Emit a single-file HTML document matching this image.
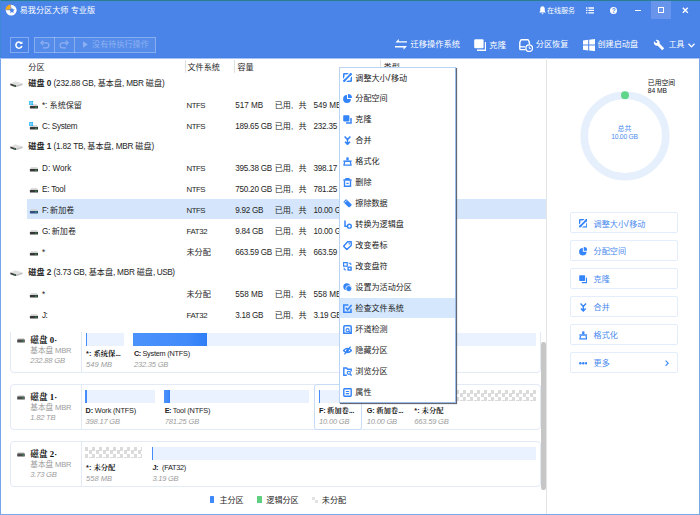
<!DOCTYPE html><html lang="zh-CN"><head><meta charset="utf-8"><title>易我分区大师 专业版</title><style>
*{box-sizing:border-box;margin:0;padding:0}
html,body{width:700px;height:515px;overflow:hidden;background:#fff}
body{position:relative;font-family:"Liberation Sans","Noto Sans CJK SC",sans-serif;font-size:8.1px;color:#262626;}
.a{position:absolute;white-space:nowrap}
.t{position:absolute;white-space:nowrap;line-height:12px;height:12px}
#hdr{left:0;top:0;width:700px;height:58px;background:#4a84e8}
.w{color:#fff}
.sel{position:absolute;left:27px;width:519px;background:#d5e6fc}
.b{font-weight:bold}
.g{color:#9c9c9c}
.i{font-style:italic}
.sf{font-family:"Liberation Serif","Noto Serif CJK SC",serif;font-weight:bold}
.lb{font-family:"Liberation Sans","Noto Serif CJK SC",serif;font-weight:bold}
.card{position:absolute;left:10px;width:531px;border:1px solid #e2eaf6;border-radius:4px;background:#fff}
.card .dv{position:absolute;left:69.5px;top:0;bottom:0;width:1px;background:#e2eaf6}
.bar{position:absolute;background:#e9f2fe}
.used{position:absolute;left:0;top:0;bottom:0;background:linear-gradient(90deg,#4b92fb 0%,#408afa 75%,#2f7ef6 100%)}
.chk{background-color:#fff;background-image:conic-gradient(#fff 25%,#dbdbdb 0 50%,#fff 0 75%,#dbdbdb 0);background-size:7px 7px}
#menu{left:339px;top:67px;width:117px;height:335.5px;background:#fff;border:1px solid #bcd4f3;border-right-color:#9cbbe6;border-bottom-color:#9cbbe6;box-shadow:1px 1px 0.8px rgba(70,78,92,.85)}
.mi{position:absolute;left:0;width:115px}
.mi.hl{background:#d4e7fd;height:19.7px !important}
.mi svg{position:absolute;left:3px;width:9px;height:9px}
.btn{position:absolute;left:570px;width:108px;height:21px;border:1px solid #e4edfb;border-radius:2px;background:#fff}
.btn svg{position:absolute;left:7.6px;top:6.2px;width:8.6px;height:8.6px}
</style></head><body>
<div class="a" id="hdr">
<div class="a" style="left:0;top:0;width:700px;height:1px;background:#2c7c98"></div>
<div class="a" style="left:0;top:1px;width:700px;height:1px;background:#4489de"></div>
<div class="a" style="left:0;top:0;width:1px;height:58px;background:#3f88d8"></div>
<div class="a" style="left:0;top:57px;width:700px;height:1px;background:#4680e4"></div>
<svg class="a" style="left:4.4px;top:3.3px;width:14px;height:14px" viewBox="0 0 14 14"><circle cx="7.2" cy="7.2" r="5.4" fill="#fff"/><path d="M6.8 6.9L1.2 6.9A5.6 5.6 0 0 1 6.8 1.3Z" fill="#f8a91f" stroke="#4a84e8" stroke-width="0.5"/><path d="M7.9 4.4l0.9 1.9 2 .2-1.5 1.4.4 2-1.8-1-1.8 1 .4-2L5 6.5l2-.2z" fill="#4a84e8"/></svg>
<div class="t w" style="left:19.7px;top:5px;font-size:8.15px;">易我分区大师<span style="font-size:8.15px;letter-spacing:0.01px"> </span>专业版</div>
<svg class="a" style="left:539px;top:6px;width:7px;height:8.5px" viewBox="0 0 7 8.5"><path d="M3.5 0.3C1.8 0.3 1.2 1.8 1.2 3.2V5L0.2 6.6H6.8L5.8 5V3.2C5.8 1.8 5.2 0.3 3.5 0.3Z" fill="#fff"/><path d="M2.4 7.2H4.6L3.5 8.4Z" fill="#fff"/></svg>
<div class="t w" style="left:547.0px;top:5px;font-size:7.00px;">在线服务</div>
<svg class="a" style="left:586px;top:7px;width:8px;height:7px" viewBox="0 0 8 7"><path d="M0 1H1.4M2.4 1H8M0 3.4H1.4M2.4 3.4H8M0 5.8H1.4M2.4 5.8H8" stroke="#fff" stroke-width="1.3"/></svg>
<div class="a" style="left:610.1px;top:6.5px;width:7.4px;height:7.4px;border-radius:4px;background:#fff;color:#4a84e8;font-size:6.5px;font-weight:bold;line-height:7.6px;text-align:center">?</div>
<div class="a" style="left:635px;top:9.5px;width:5.5px;height:1.6px;background:#fff"></div>
<div class="a" style="left:651.4px;top:1px;width:19.4px;height:17.5px;background:#6894ec"></div>
<div class="a" style="left:658.2px;top:7.2px;width:6.2px;height:6px;border:1.6px solid #fff"></div>
<svg class="a" style="left:682px;top:7px;width:6.6px;height:6.6px" viewBox="0 0 8 8"><path d="M1 1L7 7M7 1L1 7" stroke="#fff" stroke-width="1.7"/></svg>
<div class="a" style="left:10px;top:36.5px;width:18.6px;height:16.2px;border:1px solid rgba(255,255,255,.32)"></div>
<svg class="a" style="left:15.4px;top:41px;width:8px;height:8px" viewBox="0 0 10 10"><path d="M8.6 6.3A3.8 3.8 0 1 1 7.4 2.2" fill="none" stroke="#fff" stroke-width="1.9"/><path d="M5.4 3.9H9.3V0.3Z" fill="#fff"/></svg>
<div class="a" style="left:34.3px;top:36.5px;width:121.4px;height:16.2px;border:1px solid rgba(255,255,255,.3);background:rgba(255,255,255,.07)"></div>
<div class="a" style="left:54.3px;top:36.5px;width:1px;height:16.2px;background:rgba(255,255,255,.3)"></div>
<div class="a" style="left:74.3px;top:36.5px;width:1px;height:16.2px;background:rgba(255,255,255,.3)"></div>
<svg class="a" style="left:39.6px;top:40.4px;width:10px;height:9px" viewBox="0 0 10 9"><path d="M1 2.8H6.4A2.5 2.5 0 0 1 6.4 7.8H3" fill="none" stroke="#8db0f2" stroke-width="1.2"/><path d="M3.2 0.6L0.9 2.8L3.2 5" fill="none" stroke="#8db0f2" stroke-width="1.2"/></svg>
<svg class="a" style="left:59.3px;top:40.4px;width:10px;height:9px" viewBox="0 0 10 9"><path d="M9 2.8H3.6A2.5 2.5 0 0 0 3.6 7.8H7" fill="none" stroke="#8db0f2" stroke-width="1.2"/><path d="M6.8 0.6L9.1 2.8L6.8 5" fill="none" stroke="#8db0f2" stroke-width="1.2"/></svg>
<svg class="a" style="left:82.8px;top:41.2px;width:4.8px;height:7px" viewBox="0 0 5 7"><path d="M0 0L5 3.5L0 7Z" fill="#8db0f2"/></svg>
<div class="t " style="left:92.1px;top:39px;font-size:8.10px;color:#8db0f2;">没有待执行操作</div>
<svg class="a" style="left:394.8px;top:39.3px;width:12.4px;height:11px" viewBox="0 0 12.4 11"><path d="M0.4 3.6L3.8 0V2.2H12.2V3.6Z M0 7H12L8.6 10.8V8.5H0Z" fill="#fff"/></svg>
<div class="t w" style="left:410.4px;top:39px;font-size:8.25px;">迁移操作系统</div>
<svg class="a" style="left:473.6px;top:38.6px;width:12.8px;height:12.2px" viewBox="0 0 12.8 12.2"><rect x="0.2" y="0.2" width="9.4" height="9" rx="1.2" fill="#fff"/><path d="M11.6 3V11.2H3" fill="none" stroke="#fff" stroke-width="1.5"/></svg>
<div class="t w" style="left:489.3px;top:39px;font-size:8.40px;">克隆</div>
<svg class="a" style="left:519px;top:39px;width:14.4px;height:13px" viewBox="0 0 14.4 13"><path d="M6.4 10.6H1.6Q0.8 10.6 0.8 9.8V3.4L1.7 1.2Q1.9 0.8 2.5 0.8H8.7Q9.3 0.8 9.5 1.2L10.4 3.4V5.4" fill="none" stroke="#fff" stroke-width="1.4"/><path d="M0.8 7.8H6" stroke="#fff" stroke-width="1.3"/><circle cx="10.2" cy="9.2" r="3.3" fill="#4a84e8" stroke="#fff" stroke-width="1.3"/><path d="M10.2 7.4V9.4H11.8" fill="none" stroke="#fff" stroke-width="1"/></svg>
<div class="t w" style="left:535.8px;top:39px;font-size:8.15px;">分区恢复</div>
<svg class="a" style="left:582.7px;top:39px;width:12px;height:12.2px" viewBox="0 0 12 12"><path d="M0 1.4L5.2 0.7V5.5H0ZM6.2 0.6L12 0V5.5H6.2ZM0 6.5H5.2V11.3L0 10.6ZM6.2 6.5H12V12L6.2 11.4Z" fill="#fff"/></svg>
<div class="t w" style="left:597.4px;top:39px;font-size:8.15px;">创建启动盘</div>
<svg class="a" style="left:653px;top:39px;width:11.8px;height:11.8px;transform:scaleX(-1)" viewBox="0 0 12 12"><path d="M11 2.4L8.8 4.4L7.4 3L9.4 0.9A3.3 3.3 0 0 0 5.2 4.8L0.6 9.4L2.6 11.4L7.2 6.8A3.3 3.3 0 0 0 11 2.4Z" fill="#fff"/></svg>
<div class="t w" style="left:668.8px;top:39px;font-size:7.80px;">工具</div>
<svg class="a" style="left:687.6px;top:42.6px;width:7px;height:5px" viewBox="0 0 7 5"><path d="M0.5 0.8L3.5 3.9L6.5 0.8" fill="none" stroke="#fff" stroke-width="1.3"/></svg>
</div>
<div class="a" style="left:0;top:58px;width:700px;height:1px;background:#a9c4f4"></div>
<div class="t " style="left:28.3px;top:62px;font-size:8.10px;">分区</div>
<div class="t " style="left:187.5px;top:62px;font-size:8.10px;">文件系统</div>
<div class="t " style="left:237.5px;top:62px;font-size:8.10px;">容量</div>
<div class="t " style="left:383.6px;top:62px;font-size:8.10px;">类型</div>
<div class="a" style="left:184.5px;top:60px;width:1px;height:13px;background:#e1e1e1"></div>
<div class="a" style="left:234.0px;top:60px;width:1px;height:13px;background:#e1e1e1"></div>
<div class="a" style="left:379.5px;top:60px;width:1px;height:13px;background:#e1e1e1"></div>
<svg class="a" style="left:10.4px;top:80.5px;width:13px;height:6.8px" viewBox="0 0 13 6.8"><path d="M0.3 2.6L5.4 0.2L12.7 2.5L6 4.3Z" fill="#e0e0e0"/><path d="M6 4.3L12.7 2.5V3.9L6 6.4Z" fill="#c2c2c2"/><path d="M0.3 2.6L6 4.3V6.4L0.3 4.2Z" fill="#3c3c3c"/><path d="M4.1 4.5L5.2 4.85V5.5L4.1 5.15Z" fill="#3fd06a"/></svg>
<div class="t" style="left:28.3px;top:78px"><b>磁盘<span style="font-size:8.23px;letter-spacing:0.05px"> 0</span></b><span style="font-size:8.23px;letter-spacing:-0.20px"> (232.88 GB, </span>基本盘<span style="font-size:8.23px;letter-spacing:-0.23px">, MBR </span>磁盘<span style="font-size:8.23px;letter-spacing:-0.20px">)</span></div>
<svg class="a" style="left:28.9px;top:101.0px;width:9.2px;height:7.6px" viewBox="0 0 9.2 7.6"><path d="M2 3.3H8.2L9.1 5H1Z" fill="#d2d2d2"/><rect x="0.9" y="4.9" width="8.2" height="2.5" rx="0.5" fill="#363636"/><rect x="6.3" y="5.7" width="1.4" height="0.9" fill="#35c565"/><path d="M0 0.3L1.8 0.1V1.8H0ZM2.2 0.1L4.1 0V1.8H2.2ZM0 2.2H1.8V3.9L0 3.8ZM2.2 2.2H4.1V4L2.2 3.9Z" fill="#1fb2f4"/></svg>
<div class="t " style="left:42.0px;top:100px;font-size:8.10px;"><span style="font-size:8.13px;letter-spacing:-0.05px">*: </span>系统保留</div>
<div class="t " style="left:186.5px;top:100px;font-size:8.10px;"><span style="font-size:7.84px;letter-spacing:-0.50px">NTFS</span></div>
<div class="t " style="left:235.2px;top:100px;font-size:8.10px;"><span style="font-size:8.13px;letter-spacing:-0.02px">517 MB</span></div>
<div class="t " style="left:274.7px;top:100px;font-size:8.10px;">已用<span style="letter-spacing:1.6px">, </span>共</div>
<div class="t " style="left:313.5px;top:100px;font-size:8.10px;"><span style="font-size:8.13px;letter-spacing:-0.02px">549 MB</span></div>
<svg class="a" style="left:28.9px;top:122.0px;width:9.2px;height:7.6px" viewBox="0 0 9.2 7.6"><path d="M2 3.3H8.2L9.1 5H1Z" fill="#d2d2d2"/><rect x="0.9" y="4.9" width="8.2" height="2.5" rx="0.5" fill="#363636"/><rect x="6.3" y="5.7" width="1.4" height="0.9" fill="#35c565"/><path d="M0 0.3L1.8 0.1V1.8H0ZM2.2 0.1L4.1 0V1.8H2.2ZM0 2.2H1.8V3.9L0 3.8ZM2.2 2.2H4.1V4L2.2 3.9Z" fill="#1fb2f4"/></svg>
<div class="t " style="left:42.0px;top:121px;font-size:8.10px;"><span style="font-size:8.13px;letter-spacing:-0.23px">C: System</span></div>
<div class="t " style="left:186.5px;top:121px;font-size:8.10px;"><span style="font-size:7.84px;letter-spacing:-0.50px">NTFS</span></div>
<div class="t " style="left:235.2px;top:121px;font-size:8.10px;"><span style="font-size:8.13px;letter-spacing:-0.22px">189.65 GB</span></div>
<div class="t " style="left:274.7px;top:121px;font-size:8.10px;">已用<span style="letter-spacing:1.6px">, </span>共</div>
<div class="t " style="left:313.5px;top:121px;font-size:8.10px;"><span style="font-size:8.13px;letter-spacing:-0.22px">232.35 GB</span></div>
<svg class="a" style="left:10.4px;top:143.5px;width:13px;height:6.8px" viewBox="0 0 13 6.8"><path d="M0.3 2.6L5.4 0.2L12.7 2.5L6 4.3Z" fill="#e0e0e0"/><path d="M6 4.3L12.7 2.5V3.9L6 6.4Z" fill="#c2c2c2"/><path d="M0.3 2.6L6 4.3V6.4L0.3 4.2Z" fill="#3c3c3c"/><path d="M4.1 4.5L5.2 4.85V5.5L4.1 5.15Z" fill="#3fd06a"/></svg>
<div class="t" style="left:28.3px;top:141px"><b>磁盘<span style="font-size:8.23px;letter-spacing:0.05px"> 1</span></b><span style="font-size:8.23px;letter-spacing:-0.23px"> (1.82 TB, </span>基本盘<span style="font-size:8.23px;letter-spacing:-0.23px">, MBR </span>磁盘<span style="font-size:8.23px;letter-spacing:-0.20px">)</span></div>
<svg class="a" style="left:28.9px;top:164.0px;width:9.2px;height:7.6px" viewBox="0 0 9.2 7.6"><path d="M2 3.3H8.2L9.1 5H1Z" fill="#d2d2d2"/><rect x="0.9" y="4.9" width="8.2" height="2.5" rx="0.5" fill="#363636"/><rect x="6.3" y="5.7" width="1.4" height="0.9" fill="#35c565"/></svg>
<div class="t " style="left:42.0px;top:163px;font-size:8.10px;"><span style="font-size:8.13px;letter-spacing:0.02px">D: Work</span></div>
<div class="t " style="left:186.5px;top:163px;font-size:8.10px;"><span style="font-size:7.84px;letter-spacing:-0.50px">NTFS</span></div>
<div class="t " style="left:235.2px;top:163px;font-size:8.10px;"><span style="font-size:8.13px;letter-spacing:-0.22px">395.38 GB</span></div>
<div class="t " style="left:274.7px;top:163px;font-size:8.10px;">已用<span style="letter-spacing:1.6px">, </span>共</div>
<div class="t " style="left:313.5px;top:163px;font-size:8.10px;"><span style="font-size:8.13px;letter-spacing:-0.22px">398.17 GB</span></div>
<svg class="a" style="left:28.9px;top:185.0px;width:9.2px;height:7.6px" viewBox="0 0 9.2 7.6"><path d="M2 3.3H8.2L9.1 5H1Z" fill="#d2d2d2"/><rect x="0.9" y="4.9" width="8.2" height="2.5" rx="0.5" fill="#363636"/><rect x="6.3" y="5.7" width="1.4" height="0.9" fill="#35c565"/></svg>
<div class="t " style="left:42.0px;top:184px;font-size:8.10px;"><span style="font-size:8.13px;letter-spacing:-0.20px">E: Tool</span></div>
<div class="t " style="left:186.5px;top:184px;font-size:8.10px;"><span style="font-size:7.84px;letter-spacing:-0.50px">NTFS</span></div>
<div class="t " style="left:235.2px;top:184px;font-size:8.10px;"><span style="font-size:8.13px;letter-spacing:-0.22px">750.20 GB</span></div>
<div class="t " style="left:274.7px;top:184px;font-size:8.10px;">已用<span style="letter-spacing:1.6px">, </span>共</div>
<div class="t " style="left:313.5px;top:184px;font-size:8.10px;"><span style="font-size:8.13px;letter-spacing:-0.22px">781.25 GB</span></div>
<div class="sel" style="top:198.9px;height:20.3px"></div>
<svg class="a" style="left:28.9px;top:206.0px;width:9.2px;height:7.6px" viewBox="0 0 9.2 7.6"><path d="M2 3.3H8.2L9.1 5H1Z" fill="#d2d2d2"/><rect x="0.9" y="4.9" width="8.2" height="2.5" rx="0.5" fill="#2f4f7f"/><rect x="6.3" y="5.7" width="1.4" height="0.9" fill="#35c565"/></svg>
<div class="t " style="left:42.0px;top:205px;font-size:8.10px;"><span style="font-size:8.13px;letter-spacing:-0.46px">F: </span>新加卷</div>
<div class="t " style="left:186.5px;top:205px;font-size:8.10px;"><span style="font-size:7.84px;letter-spacing:-0.50px">NTFS</span></div>
<div class="t " style="left:235.2px;top:205px;font-size:8.10px;"><span style="font-size:8.13px;letter-spacing:-0.27px">9.92 GB</span></div>
<div class="t " style="left:274.7px;top:205px;font-size:8.10px;">已用<span style="letter-spacing:1.6px">, </span>共</div>
<div class="t " style="left:313.5px;top:205px;font-size:8.10px;"><span style="font-size:8.13px;letter-spacing:-0.24px">10.00 GB</span></div>
<svg class="a" style="left:28.9px;top:227.0px;width:9.2px;height:7.6px" viewBox="0 0 9.2 7.6"><path d="M2 3.3H8.2L9.1 5H1Z" fill="#d2d2d2"/><rect x="0.9" y="4.9" width="8.2" height="2.5" rx="0.5" fill="#363636"/><rect x="6.3" y="5.7" width="1.4" height="0.9" fill="#35c565"/></svg>
<div class="t " style="left:42.0px;top:226px;font-size:8.10px;"><span style="font-size:8.13px;letter-spacing:-0.36px">G: </span>新加卷</div>
<div class="t " style="left:186.5px;top:226px;font-size:8.10px;"><span style="font-size:7.84px;letter-spacing:-0.33px">FAT32</span></div>
<div class="t " style="left:235.2px;top:226px;font-size:8.10px;"><span style="font-size:8.13px;letter-spacing:-0.27px">9.84 GB</span></div>
<div class="t " style="left:274.7px;top:226px;font-size:8.10px;">已用<span style="letter-spacing:1.6px">, </span>共</div>
<div class="t " style="left:313.5px;top:226px;font-size:8.10px;"><span style="font-size:8.13px;letter-spacing:-0.24px">10.00 GB</span></div>
<svg class="a" style="left:28.9px;top:248.0px;width:9.2px;height:7.6px" viewBox="0 0 9.2 7.6"><path d="M2 3.3H8.2L9.1 5H1Z" fill="#d2d2d2"/><rect x="0.9" y="4.9" width="8.2" height="2.5" rx="0.5" fill="#363636"/><rect x="6.3" y="5.7" width="1.4" height="0.9" fill="#35c565"/></svg>
<div class="t " style="left:42.0px;top:247px;font-size:8.10px;"><span style="font-size:8.13px;letter-spacing:0.30px">*</span></div>
<div class="t " style="left:186.5px;top:247px;font-size:8.10px;">未分配</div>
<div class="t " style="left:235.2px;top:247px;font-size:8.10px;"><span style="font-size:8.13px;letter-spacing:-0.22px">663.59 GB</span></div>
<div class="t " style="left:274.7px;top:247px;font-size:8.10px;">已用<span style="letter-spacing:1.6px">, </span>共</div>
<div class="t " style="left:313.5px;top:247px;font-size:8.10px;"><span style="font-size:8.13px;letter-spacing:-0.22px">663.59 GB</span></div>
<svg class="a" style="left:10.4px;top:269.5px;width:13px;height:6.8px" viewBox="0 0 13 6.8"><path d="M0.3 2.6L5.4 0.2L12.7 2.5L6 4.3Z" fill="#e0e0e0"/><path d="M6 4.3L12.7 2.5V3.9L6 6.4Z" fill="#c2c2c2"/><path d="M0.3 2.6L6 4.3V6.4L0.3 4.2Z" fill="#3c3c3c"/><path d="M4.1 4.5L5.2 4.85V5.5L4.1 5.15Z" fill="#3fd06a"/></svg>
<div class="t" style="left:28.3px;top:267px"><b>磁盘<span style="font-size:8.23px;letter-spacing:0.05px"> 2</span></b><span style="font-size:8.23px;letter-spacing:-0.23px"> (3.73 GB, </span>基本盘<span style="font-size:8.23px;letter-spacing:-0.23px">, MBR </span>磁盘<span style="font-size:8.23px;letter-spacing:-0.42px">, USB)</span></div>
<svg class="a" style="left:28.9px;top:290.0px;width:9.2px;height:7.6px" viewBox="0 0 9.2 7.6"><path d="M2 3.3H8.2L9.1 5H1Z" fill="#d2d2d2"/><rect x="0.9" y="4.9" width="8.2" height="2.5" rx="0.5" fill="#363636"/><rect x="6.3" y="5.7" width="1.4" height="0.9" fill="#35c565"/></svg>
<div class="t " style="left:42.0px;top:289px;font-size:8.10px;"><span style="font-size:8.13px;letter-spacing:0.30px">*</span></div>
<div class="t " style="left:186.5px;top:289px;font-size:8.10px;">未分配</div>
<div class="t " style="left:235.2px;top:289px;font-size:8.10px;"><span style="font-size:8.13px;letter-spacing:-0.02px">558 MB</span></div>
<div class="t " style="left:274.7px;top:289px;font-size:8.10px;">已用<span style="letter-spacing:1.6px">, </span>共</div>
<div class="t " style="left:313.5px;top:289px;font-size:8.10px;"><span style="font-size:8.13px;letter-spacing:-0.02px">558 MB</span></div>
<svg class="a" style="left:28.9px;top:311.0px;width:9.2px;height:7.6px" viewBox="0 0 9.2 7.6"><path d="M2 3.3H8.2L9.1 5H1Z" fill="#d2d2d2"/><rect x="0.9" y="4.9" width="8.2" height="2.5" rx="0.5" fill="#363636"/><rect x="6.3" y="5.7" width="1.4" height="0.9" fill="#35c565"/></svg>
<div class="t " style="left:42.0px;top:310px;font-size:8.10px;"><span style="font-size:8.13px;letter-spacing:-0.50px">J:</span></div>
<div class="t " style="left:186.5px;top:310px;font-size:8.10px;"><span style="font-size:7.84px;letter-spacing:-0.33px">FAT32</span></div>
<div class="t " style="left:235.2px;top:310px;font-size:8.10px;"><span style="font-size:8.13px;letter-spacing:-0.27px">3.18 GB</span></div>
<div class="t " style="left:274.7px;top:310px;font-size:8.10px;">已用<span style="letter-spacing:1.6px">, </span>共</div>
<div class="t " style="left:313.5px;top:310px;font-size:8.10px;"><span style="font-size:8.13px;letter-spacing:-0.27px">3.19 GB</span></div>
<div class="a" style="left:546px;top:58px;width:1px;height:456px;background:#e4e4e4"></div>
<div class="a" style="left:0;top:332.0px;width:546px;height:160px;overflow:hidden">
<div class="card" style="top:-5.0px;height:45.5px"><div class="dv"></div><svg class="a" style="left:5.5px;top:9.6px;width:8px;height:5px" viewBox="0 0 8 5"><path d="M1 0.4H7L7.8 1.8H0.2Z" fill="#b8b8b8"/><rect x="0.2" y="1.6" width="7.6" height="3" rx="0.5" fill="#4a4a4a"/><rect x="5.6" y="2.6" width="1.2" height="0.9" fill="#3bd16f"/></svg><div class="t sf" style="left:19.3px;top:6px;font-size:8.60px;color:#111;">磁盘<span style="font-size:8.82px;letter-spacing:0.05px"> 0</span>·</div><div class="t g" style="left:19.3px;top:17px;font-size:7.65px;">基本盘<span style="font-size:7.55px;letter-spacing:-0.21px"> MBR</span></div><div class="t g i" style="left:19.3px;top:27px;font-size:7.65px;"><span style="font-size:7.64px;letter-spacing:-0.21px">232.88 GB</span></div><div class="bar" style="left:74.5px;top:5.2px;height:12.4px;width:38.7px"><div class="used" style="width:1.9px"></div></div><div class="t lb" style="left:75.1px;top:20px;font-size:7.35px;color:#1a1a1a;"><span style="font-size:7.30px;letter-spacing:-0.00px">*: </span>系统保<span style="font-size:7.30px;letter-spacing:-0.39px">...</span></div><div class="t g i" style="left:75.1px;top:31px;font-size:7.65px;"><span style="font-size:7.55px;letter-spacing:-0.02px">549 MB</span></div><div class="bar" style="left:122.3px;top:5.2px;height:12.4px;width:402.7px"><div class="used" style="width:73.7px"></div></div><div class="t " style="left:122.9px;top:20px;font-size:7.35px;color:#222;"><b><span style="font-size:7.30px;letter-spacing:-0.49px">C:</span></b><span style="font-size:7.30px;letter-spacing:-0.22px"> System (NTFS)</span></div><div class="t g i" style="left:122.9px;top:31px;font-size:7.65px;"><span style="font-size:7.55px;letter-spacing:-0.20px">232.35 GB</span></div></div>
<div class="card" style="top:52.0px;height:45.5px"><div class="dv"></div><svg class="a" style="left:5.5px;top:9.6px;width:8px;height:5px" viewBox="0 0 8 5"><path d="M1 0.4H7L7.8 1.8H0.2Z" fill="#b8b8b8"/><rect x="0.2" y="1.6" width="7.6" height="3" rx="0.5" fill="#4a4a4a"/><rect x="5.6" y="2.6" width="1.2" height="0.9" fill="#3bd16f"/></svg><div class="t sf" style="left:19.3px;top:6px;font-size:8.60px;color:#111;">磁盘<span style="font-size:8.82px;letter-spacing:0.05px"> 1</span>·</div><div class="t g" style="left:19.3px;top:17px;font-size:7.65px;">基本盘<span style="font-size:7.55px;letter-spacing:-0.21px"> MBR</span></div><div class="t g i" style="left:19.3px;top:27px;font-size:7.65px;"><span style="font-size:7.64px;letter-spacing:-0.25px">1.82 TB</span></div><div class="bar" style="left:74.0px;top:5.2px;height:12.4px;width:69.7px"><div class="used" style="width:1.8px"></div></div><div class="t " style="left:74.6px;top:20px;font-size:7.35px;color:#222;"><b><span style="font-size:7.30px;letter-spacing:-0.17px">D:</span></b><span style="font-size:7.30px;letter-spacing:-0.15px"> Work (NTFS)</span></div><div class="t g i" style="left:74.6px;top:31px;font-size:7.65px;"><span style="font-size:7.55px;letter-spacing:-0.20px">398.17 GB</span></div><div class="bar" style="left:153.1px;top:5.2px;height:12.4px;width:144.9px"><div class="used" style="width:5.7px"></div></div><div class="t " style="left:153.7px;top:20px;font-size:7.35px;color:#222;"><b><span style="font-size:7.30px;letter-spacing:-0.50px">E:</span></b><span style="font-size:7.30px;letter-spacing:-0.17px"> Tool (NTFS)</span></div><div class="t g i" style="left:153.7px;top:31px;font-size:7.65px;"><span style="font-size:7.55px;letter-spacing:-0.20px">781.25 GB</span></div><div class="bar" style="left:307.5px;top:5.2px;height:12.4px;width:38.5px"><div class="used" style="width:1.2px"></div></div><div class="t lb" style="left:308.1px;top:20px;font-size:7.35px;color:#1a1a1a;"><span style="font-size:7.30px;letter-spacing:-0.37px">F: </span>新加卷<span style="font-size:7.30px;letter-spacing:-0.39px">...</span></div><div class="t g i" style="left:308.1px;top:31px;font-size:7.65px;"><span style="font-size:7.55px;letter-spacing:-0.22px">10.00 GB</span></div><div class="bar" style="left:355.2px;top:5.2px;height:12.4px;width:38.3px"><div class="used" style="width:1.2px"></div></div><div class="t lb" style="left:355.8px;top:20px;font-size:7.35px;color:#1a1a1a;"><span style="font-size:7.30px;letter-spacing:-0.27px">G: </span>新加卷<span style="font-size:7.30px;letter-spacing:-0.39px">...</span></div><div class="t g i" style="left:355.8px;top:31px;font-size:7.65px;"><span style="font-size:7.55px;letter-spacing:-0.22px">10.00 GB</span></div><div class="bar chk" style="left:403px;top:5px;height:11.3px;width:122px"></div><div class="t lb" style="left:403.3px;top:20px;font-size:7.35px;color:#1a1a1a;"><span style="font-size:7.30px;letter-spacing:-0.00px">*: </span>未分配</div><div class="t g i" style="left:403.3px;top:31px;font-size:7.65px;"><span style="font-size:7.55px;letter-spacing:-0.20px">663.59 GB</span></div></div>
<div class="card" style="top:109.0px;height:45.5px"><div class="dv"></div><svg class="a" style="left:5.5px;top:9.6px;width:8px;height:5px" viewBox="0 0 8 5"><path d="M1 0.4H7L7.8 1.8H0.2Z" fill="#b8b8b8"/><rect x="0.2" y="1.6" width="7.6" height="3" rx="0.5" fill="#4a4a4a"/><rect x="5.6" y="2.6" width="1.2" height="0.9" fill="#3bd16f"/></svg><div class="t sf" style="left:19.3px;top:6px;font-size:8.60px;color:#111;">磁盘<span style="font-size:8.82px;letter-spacing:0.05px"> 2</span>·</div><div class="t g" style="left:19.3px;top:17px;font-size:7.65px;">基本盘<span style="font-size:7.55px;letter-spacing:-0.21px"> MBR</span></div><div class="t g i" style="left:19.3px;top:27px;font-size:7.65px;"><span style="font-size:7.64px;letter-spacing:-0.25px">3.73 GB</span></div><div class="bar chk" style="left:74px;top:5px;height:11.3px;width:57px"></div><div class="t lb" style="left:75.1px;top:20px;font-size:7.35px;color:#1a1a1a;"><span style="font-size:7.30px;letter-spacing:-0.00px">*: </span>未分配</div><div class="t g i" style="left:75.1px;top:31px;font-size:7.65px;"><span style="font-size:7.55px;letter-spacing:-0.02px">558 MB</span></div><div class="bar" style="left:140.8px;top:5.2px;height:12.4px;width:384.2px"><div class="used" style="width:1.2px"></div></div><div class="t " style="left:141.4px;top:20px;font-size:7.35px;color:#222;"><b><span style="font-size:7.30px;letter-spacing:-0.50px">J:</span></b><span style="font-size:7.30px;letter-spacing:0.01px"> </span> <span style="font-size:7.30px;letter-spacing:-0.27px">(FAT32)</span></div><div class="t g i" style="left:141.4px;top:31px;font-size:7.65px;"><span style="font-size:7.55px;letter-spacing:-0.25px">3.19 GB</span></div></div>
</div>
<div class="a" style="left:313.5px;top:384px;width:48.5px;height:45.5px;border:1px solid #c9dcf6;border-radius:3px"></div>
<div class="a" style="left:541px;top:341.7px;width:4.6px;height:148.3px;background:#c6c6c6;border-radius:2.3px"></div>
<div class="a" style="left:209.6px;top:496px;width:4.6px;height:7.4px;background:#3f8afa;border-radius:0.5px"></div>
<div class="t " style="left:219.4px;top:495px;font-size:8.10px;">主分区</div>
<div class="a" style="left:257px;top:496px;width:4.6px;height:7.4px;background:#5fd07f;border-radius:0.5px"></div>
<div class="t " style="left:266.3px;top:495px;font-size:8.10px;">逻辑分区</div>
<div class="a" style="left:312.3px;top:496.6px;width:3px;height:3px;background:#e2e2e2"></div>
<div class="a" style="left:315.3px;top:499.6px;width:3px;height:3px;background:#e2e2e2"></div>
<div class="t " style="left:321.8px;top:495px;font-size:8.10px;">未分配</div>
<svg class="a" style="left:574.5px;top:85.5px;width:100px;height:100px" viewBox="0 0 100 100"><circle cx="50" cy="50" r="40.75" fill="none" stroke="#e6f0fc" stroke-width="7.6"/><circle cx="50" cy="9.3" r="4" fill="#5fd68a"/></svg>
<div class="t " style="left:647.8px;top:77px;font-size:6.85px;color:#111;">已用空间</div>
<div class="t " style="left:647.8px;top:85px;font-size:6.70px;color:#111;"><span style="font-size:6.70px;letter-spacing:-0.01px">84 MB</span></div>
<div class="t " style="left:574.5px;top:123px;font-size:7.00px;color:#4a8aee;width:100px;text-align:center;">总共</div>
<div class="t " style="left:574.5px;top:131px;font-size:6.70px;color:#4a8aee;width:100px;text-align:center;"><span style="font-size:6.70px;letter-spacing:-0.20px">10.00 GB</span></div>
<div class="btn" style="top:212.0px"><svg viewBox="0 0 9 9" ><rect x="0.75" y="0.75" width="7.5" height="7.5" rx="0.5" fill="none" stroke="#3484fa" stroke-width="1.5"/><path d="M-1 7.6L7.6 -1M1.4 10L10 1.4" stroke="#fff" stroke-width="1.1"/><path d="M1.2 7.8L7.8 1.2" stroke="#3484fa" stroke-width="1.8"/></svg><div class="t " style="left:22.6px;top:5px;font-size:8.10px;color:#4a8aee;">调整大小<span style="font-size:9.55px;letter-spacing:0.57px">/</span>移动</div></div>
<div class="btn" style="top:240.0px"><svg viewBox="0 0 9 9" ><path d="M4 1.1A3.9 3.9 0 1 0 7.9 5H4Z" fill="#3484fa"/><path d="M5 0A4 4 0 0 1 9 4H5Z" fill="#3484fa"/></svg><div class="t " style="left:22.6px;top:5px;font-size:8.10px;color:#4a8aee;">分配空间</div></div>
<div class="btn" style="top:268.0px"><svg viewBox="0 0 9 9" ><rect x="0.2" y="0.2" width="6.2" height="6.2" rx="0.8" fill="#3484fa"/><path d="M8 3V8H3" fill="none" stroke="#3484fa" stroke-width="1.5"/></svg><div class="t " style="left:22.6px;top:5px;font-size:8.10px;color:#4a8aee;">克隆</div></div>
<div class="btn" style="top:296.0px"><svg viewBox="0 0 9 9" ><path d="M1.6 0.6L4.5 3.6L7.4 0.6M4.5 3.6V8.2M2 5.8L4.5 8.4L7 5.8" fill="none" stroke="#3484fa" stroke-width="1.5"/></svg><div class="t " style="left:22.6px;top:5px;font-size:8.10px;color:#4a8aee;">合并</div></div>
<div class="btn" style="top:324.0px"><svg viewBox="0 0 9 9" ><path d="M3.3 0.4H5.7V3.4H3.3Z" fill="#3484fa"/><path d="M0.4 4.2H8.6" stroke="#3484fa" stroke-width="1.5"/><path d="M1.6 5L1 8.2H8L7.4 5" fill="none" stroke="#3484fa" stroke-width="1.3"/></svg><div class="t " style="left:22.6px;top:5px;font-size:8.10px;color:#4a8aee;">格式化</div></div>
<div class="btn" style="top:352.0px"><svg viewBox="0 0 9 9" ><circle cx="1.4" cy="4.5" r="1.3" fill="#3484fa"/><circle cx="4.5" cy="4.5" r="1.3" fill="#3484fa"/><circle cx="7.6" cy="4.5" r="1.3" fill="#3484fa"/></svg><div class="t " style="left:22.6px;top:5px;font-size:8.10px;color:#4a8aee;">更多</div><svg style="left:94px;top:7px;width:4px;height:6.4px" viewBox="0 0 4 6.4"><path d="M0.6 0.6L3.2 3.2L0.6 5.8" fill="none" stroke="#3484fa" stroke-width="1.1"/></svg></div>
<div class="a" id="menu">
<div class="mi" style="top:-0.7px;height:20.4px"><svg style="top:5.7px" viewBox="0 0 9 9" ><rect x="0.75" y="0.75" width="7.5" height="7.5" rx="0.5" fill="none" stroke="#3484fa" stroke-width="1.5"/><path d="M-1 7.6L7.6 -1M1.4 10L10 1.4" stroke="#fff" stroke-width="1.1"/><path d="M1.2 7.8L7.8 1.2" stroke="#3484fa" stroke-width="1.8"/></svg><div class="t " style="left:15.3px;top:5px;font-size:8.10px;color:#222;">调整大小<span style="font-size:9.55px;letter-spacing:0.57px">/</span>移动</div></div>
<div class="mi" style="top:20.3px;height:20.4px"><svg style="top:5.7px" viewBox="0 0 9 9" ><path d="M4 1.1A3.9 3.9 0 1 0 7.9 5H4Z" fill="#3484fa"/><path d="M5 0A4 4 0 0 1 9 4H5Z" fill="#3484fa"/></svg><div class="t " style="left:15.3px;top:5px;font-size:8.10px;color:#222;">分配空间</div></div>
<div class="mi" style="top:41.3px;height:20.4px"><svg style="top:5.7px" viewBox="0 0 9 9" ><rect x="0.2" y="0.2" width="6.2" height="6.2" rx="0.8" fill="#3484fa"/><path d="M8 3V8H3" fill="none" stroke="#3484fa" stroke-width="1.5"/></svg><div class="t " style="left:15.3px;top:5px;font-size:8.10px;color:#222;">克隆</div></div>
<div class="mi" style="top:62.3px;height:20.4px"><svg style="top:5.7px" viewBox="0 0 9 9" ><path d="M1.6 0.6L4.5 3.6L7.4 0.6M4.5 3.6V8.2M2 5.8L4.5 8.4L7 5.8" fill="none" stroke="#3484fa" stroke-width="1.5"/></svg><div class="t " style="left:15.3px;top:5px;font-size:8.10px;color:#222;">合并</div></div>
<div class="mi" style="top:83.3px;height:20.4px"><svg style="top:5.7px" viewBox="0 0 9 9" ><path d="M3.3 0.4H5.7V3.4H3.3Z" fill="#3484fa"/><path d="M0.4 4.2H8.6" stroke="#3484fa" stroke-width="1.5"/><path d="M1.6 5L1 8.2H8L7.4 5" fill="none" stroke="#3484fa" stroke-width="1.3"/></svg><div class="t " style="left:15.3px;top:5px;font-size:8.10px;color:#222;">格式化</div></div>
<div class="mi" style="top:104.3px;height:20.4px"><svg style="top:5.7px" viewBox="0 0 9 9" ><path d="M0.4 2H8.6M3 1.8V0.7H6V1.8" fill="none" stroke="#3484fa" stroke-width="1.3"/><path d="M1.5 2.6V8.3H7.5V2.6" fill="none" stroke="#3484fa" stroke-width="1.4"/><path d="M3.4 5.4H5.6" stroke="#3484fa" stroke-width="1.3"/></svg><div class="t " style="left:15.3px;top:5px;font-size:8.10px;color:#222;">删除</div></div>
<div class="mi" style="top:125.3px;height:20.4px"><svg style="top:5.7px" viewBox="0 0 9 9" ><path d="M3.6 0.6L8.6 5.4Q9 6 8.4 6.6L6.6 8.2Q6 8.6 5.4 8L0.6 3.4Q0.2 2.8 0.8 2.4L2.6 0.6Q3.1 0.2 3.6 0.6Z" fill="#3484fa"/><path d="M1.6 3.6L3.6 1.6" stroke="#fff" stroke-width="0.9"/></svg><div class="t " style="left:15.3px;top:5px;font-size:8.10px;color:#222;">擦除数据</div></div>
<div class="mi" style="top:146.3px;height:20.4px"><svg style="top:5.7px" viewBox="0 0 9 9" ><path d="M2 0.4V6.2H4.4" fill="none" stroke="#3484fa" stroke-width="1.5"/><circle cx="6.4" cy="6.2" r="1.9" fill="none" stroke="#3484fa" stroke-width="1.4"/></svg><div class="t " style="left:15.3px;top:5px;font-size:8.10px;color:#222;">转换为逻辑盘</div></div>
<div class="mi" style="top:167.3px;height:20.4px"><svg style="top:5.7px" viewBox="0 0 9 9" ><path d="M4.6 0.8H8.2V4.4L3.8 8.6L0.6 5.2Z" fill="none" stroke="#3484fa" stroke-width="1.4" stroke-linejoin="round"/><circle cx="6.3" cy="2.7" r="0.8" fill="#3484fa"/></svg><div class="t " style="left:15.3px;top:5px;font-size:8.10px;color:#222;">改变卷标</div></div>
<div class="mi" style="top:188.3px;height:20.4px"><svg style="top:5.7px" viewBox="0 0 9 9" ><rect x="0.6" y="0.6" width="3.6" height="3.6" fill="none" stroke="#3484fa" stroke-width="1.2"/><rect x="4.4" y="4.4" width="4.4" height="4.4" rx="0.5" fill="#3484fa"/><path d="M5.6 1.2H7.8V3M1.2 5.8V7.8H3" fill="none" stroke="#3484fa" stroke-width="1"/><rect x="5.8" y="5.8" width="1.6" height="1.6" fill="#fff"/></svg><div class="t " style="left:15.3px;top:5px;font-size:8.10px;color:#222;">改变盘符</div></div>
<div class="mi" style="top:209.3px;height:20.4px"><svg style="top:5.7px" viewBox="0 0 9 9" ><circle cx="3.8" cy="3.8" r="3.5" fill="#3484fa"/><circle cx="5.8" cy="5.6" r="3" fill="#3484fa" stroke="#fff" stroke-width="0.8"/></svg><div class="t " style="left:15.3px;top:5px;font-size:8.10px;color:#222;">设置为活动分区</div></div>
<div class="mi hl" style="top:230.3px;height:20.4px"><svg style="top:5.7px" viewBox="0 0 9 9" ><path d="M8 4.8V8.2H0.8V1H5.4" fill="none" stroke="#3484fa" stroke-width="1.5"/><path d="M2.8 3.8L4.6 5.8L8.6 1" fill="none" stroke="#3484fa" stroke-width="1.5"/></svg><div class="t " style="left:15.3px;top:5px;font-size:8.10px;color:#222;">检查文件系统</div></div>
<div class="mi" style="top:251.3px;height:20.4px"><svg style="top:5.7px" viewBox="0 0 9 9" ><path d="M0.8 8.3V2Q0.8 0.8 2 0.8H7Q8.2 0.8 8.2 2V8.3Z" fill="none" stroke="#3484fa" stroke-width="1.5"/><circle cx="4.6" cy="5.2" r="1.6" fill="none" stroke="#3484fa" stroke-width="1.1"/><path d="M5.8 6.4L7.6 8.2" stroke="#3484fa" stroke-width="1.3"/></svg><div class="t " style="left:15.3px;top:5px;font-size:8.10px;color:#222;">坏道检测</div></div>
<div class="mi" style="top:272.3px;height:20.4px"><svg style="top:5.7px" viewBox="0 0 9 9" ><path d="M0.4 4.5Q4.5 0.4 8.6 4.5Q4.5 8.6 0.4 4.5Z" fill="none" stroke="#3484fa" stroke-width="1.3"/><circle cx="4.5" cy="4.5" r="1.5" fill="#3484fa"/><path d="M7.6 0.6L1.4 8.4" stroke="#3484fa" stroke-width="1.3"/></svg><div class="t " style="left:15.3px;top:5px;font-size:8.10px;color:#222;">隐藏分区</div></div>
<div class="mi" style="top:293.3px;height:20.4px"><svg style="top:5.7px" viewBox="0 0 9 9" ><path d="M3.8 8.2H0.8V1H3.6L4.6 2.2H8.2V4.4" fill="none" stroke="#3484fa" stroke-width="1.4"/><circle cx="5.8" cy="5.8" r="1.6" fill="none" stroke="#3484fa" stroke-width="1.1"/><path d="M7 7L8.6 8.6" stroke="#3484fa" stroke-width="1.3"/></svg><div class="t " style="left:15.3px;top:5px;font-size:8.10px;color:#222;">浏览分区</div></div>
<div class="mi" style="top:314.3px;height:20.4px"><svg style="top:5.7px" viewBox="0 0 9 9" ><rect x="0.8" y="0.8" width="7.4" height="7.4" rx="0.6" fill="none" stroke="#3484fa" stroke-width="1.4"/><path d="M2.8 3.5H6.2M2.8 5.6H6.2" stroke="#3484fa" stroke-width="1.1"/></svg><div class="t " style="left:15.3px;top:5px;font-size:8.10px;color:#222;">属性</div></div>
</div>
<div class="a" style="left:0;top:59px;width:1px;height:456px;background:#79a6ea"></div>
<div class="a" style="left:699px;top:58px;width:1px;height:457px;background:#7aa7ea"></div>
<div class="a" style="left:0;top:514px;width:700px;height:1px;background:#7aa7ea"></div>
</body></html>
